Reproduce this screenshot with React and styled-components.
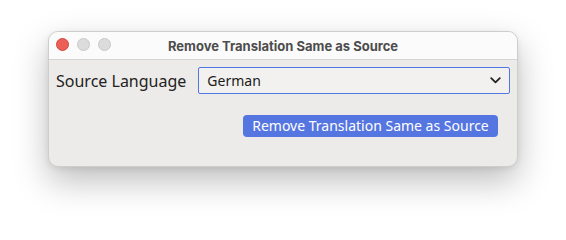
import React from "react";
import styled, { createGlobalStyle } from "styled-components";

const Global = createGlobalStyle`
  html, body { margin: 0; padding: 0; background: #ffffff; }
  body { width: 566px; height: 235px; overflow: hidden; }
`;

const Stage = styled.div`
  padding: 31px 0 0 48px;
`;

const Window = styled.div`
  width: 470px;
  height: 136px;
  box-sizing: border-box;
  border-radius: 10px;
  background: #ecebe9;
  border: 1px solid #cdcdcd;
  box-shadow: 0 14px 34px rgba(0, 0, 0, 0.26), 0 2px 6px rgba(0, 0, 0, 0.08);
  overflow: hidden;
  display: flex;
  flex-direction: column;
`;

const TitleBar = styled.div`
  height: 27px;
  flex: none;
  background: #fbfbfb;
  border-bottom: 1px solid #d4d4d4;
  display: flex;
  align-items: center;
  position: relative;
`;

const Lights = styled.div`
  display: flex;
  gap: 8px;
  padding-left: 7px;
  position: absolute;
  left: 0;
  top: 6px;
`;

const Light = styled.span`
  width: 13px;
  height: 13px;
  border-radius: 50%;
  box-sizing: border-box;
  background: ${(p) => p.$color};
  border: 0.5px solid ${(p) => p.$edge};
`;

const Title = styled.div`
  flex: 1;
  text-align: center;
  font-family: Inter, "Noto Sans", sans-serif;
  font-weight: 700;
  font-size: 13px;
  color: #4d4d4d;
  padding-top: 1px;
`;

const Body = styled.div`
  padding: 7px 7px 0 7px;
  display: flex;
  flex-direction: column;
`;

const Row = styled.div`
  display: flex;
  align-items: center;
  gap: 12px;
`;

const Label = styled.label`
  font-family: "Noto Sans", sans-serif;
  font-size: 16px;
  color: #222222;
  white-space: nowrap;
`;

const SelectBox = styled.div`
  flex: 1;
  height: 27px;
  box-sizing: border-box;
  border: 1px solid #5077e4;
  border-radius: 2px;
  background: #f3f1f0;
  display: flex;
  align-items: center;
  justify-content: space-between;
  padding: 0 8px 0 8px;
  font-family: "Noto Sans", sans-serif;
  font-size: 14px;
  color: #1a1a1a;
`;

const Actions = styled.div`
  display: flex;
  justify-content: flex-end;
  padding: 21px 12px 0 0;
`;

const Button = styled.button`
  height: 22px;
  width: 255px;
  border: none;
  border-radius: 4px;
  background: #5576e0;
  color: #ffffff;
  font-family: "Noto Sans", sans-serif;
  font-size: 14px;
  padding: 0;
  line-height: 22px;
`;

export default function App() {
  return (
    <>
      <Global />
      <Stage>
        <Window>
          <TitleBar>
            <Lights>
              <Light $color="#ec5f57" $edge="#d3473f" />
              <Light $color="#dcdcdc" $edge="#c8c8c8" />
              <Light $color="#dcdcdc" $edge="#c8c8c8" />
            </Lights>
            <Title>Remove Translation Same as Source</Title>
          </TitleBar>
          <Body>
            <Row>
              <Label>Source Language</Label>
              <SelectBox>
                <span>German</span>
                <svg width="11" height="7" viewBox="0 0 11 7">
                  <path d="M1.2 1.2 L5.5 5.3 L9.8 1.2" fill="none" stroke="#222" strokeWidth="1.8" strokeLinecap="round" strokeLinejoin="round" />
                </svg>
              </SelectBox>
            </Row>
            <Actions>
              <Button>Remove Translation Same as Source</Button>
            </Actions>
          </Body>
        </Window>
      </Stage>
    </>
  );
}
